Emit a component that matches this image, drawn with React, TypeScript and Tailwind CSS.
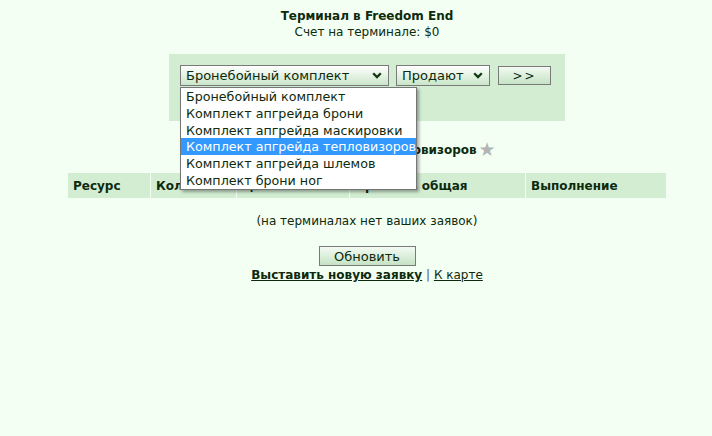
const options = [
  "Бронебойный комплект",
  "Комплект апгрейда брони",
  "Комплект апгрейда маскировки",
  "Комплект апгрейда тепловизоров",
  "Комплект апгрейда шлемов",
  "Комплект брони ног",
];

const columns = [
  { label: "Ресурс", w: "w-[82px]" },
  { label: "Количество", w: "w-[85px]" },
  { label: "Цена", w: "w-[112px]" },
  { label: "Прибыль общая", w: "w-[175px]" },
  { label: "Выполнение", w: "w-[140px]" },
];

function Chevron() {
  return (
    <svg width="10" height="7" viewBox="0 0 10 7" className="shrink-0">
      <path d="M1.2 1.2 L5 5 L8.8 1.2" fill="none" stroke="#123812" strokeWidth="2.3" />
    </svg>
  );
}

function FakeSelect({ value, width }: { value: string; width: string }) {
  return (
    <div
      className={`${width} h-[21px] flex items-center justify-between pl-[5px] pr-[6px] border border-[#7a7a7a] bg-gradient-to-b from-white to-[#c9e6c9] text-[13px] leading-none`}
    >
      <span>{value}</span>
      <Chevron />
    </div>
  );
}

export default function App() {
  return (
    <div
      className="min-h-[436px] w-full bg-[#f3fff3] text-[#0d2a0d] pl-[22px]"
      style={{ fontFamily: '"DejaVu Sans", Verdana, sans-serif' }}
    >
      <div className="flex flex-col items-center pt-[9px]">
        <div className="text-[12px] font-bold leading-[15px]">Терминал в Freedom End</div>
        <div className="text-[12px] leading-[16px]">Счет на терминале: $0</div>

        {/* order form */}
        <div className="relative mt-[14px] w-[396px] h-[67px] bg-[#d3edd3] pt-[11px] pl-[11px]">
          <div className="flex items-start">
            <FakeSelect value="Бронебойный комплект" width="w-[209px]" />
            <div className="ml-[7px]">
              <FakeSelect value="Продают" width="w-[94px]" />
            </div>
            <div className="ml-[8px] mt-[1px] w-[53px] h-[19px] flex items-center justify-center border border-[#7a7a7a] bg-gradient-to-b from-[#f2faf2] to-[#c5e3c5] text-[12px] leading-none tracking-[2px]">
              &gt;&gt;
            </div>
          </div>

          {/* open option list */}
          <div className="absolute z-10 left-[11px] top-[33px] w-[237px] border border-[#767676] bg-white shadow-[2px_2px_3px_rgba(0,0,0,0.35)]">
            {options.map((o, i) => (
              <div
                key={o}
                className={`h-[16.8px] leading-[17px] pl-[5px] text-[12.7px] whitespace-nowrap ${
                  i === 3 ? "bg-[#3399ff] text-white" : ""
                }`}
              >
                {o}
              </div>
            ))}
          </div>
        </div>

        <div className="mt-[19px] flex items-center text-[12px] font-bold leading-[16px]">
          <span>Комплект апгрейда тепловизоров</span>
          <span className="ml-[2px] text-[#b4b4b4] text-[19px] leading-none">★</span>
        </div>

        <div className="mt-[14px] flex gap-[1px] h-[25px]">
          {columns.map((c) => (
            <div
              key={c.label}
              className={`${c.w} bg-[#d3edd3] flex items-center pl-[5px] text-[12px] font-bold whitespace-nowrap overflow-hidden`}
            >
              {c.label}
            </div>
          ))}
        </div>

        <div className="mt-[15px] text-[12px] leading-[16px]">(на терминалах нет ваших заявок)</div>

        <div className="mt-[17px] w-[97px] h-[20px] flex items-center justify-center border border-[#7a7a7a] bg-gradient-to-b from-[#f2faf2] to-[#c5e3c5] text-[13px] leading-none">
          Обновить
        </div>

        <div className="mt-[1px] text-[12px] leading-[16px]">
          <span className="font-bold underline">Выставить новую заявку</span>
          <span className="text-[#555]"> | </span>
          <span className="underline">К карте</span>
        </div>
      </div>
    </div>
  );
}
